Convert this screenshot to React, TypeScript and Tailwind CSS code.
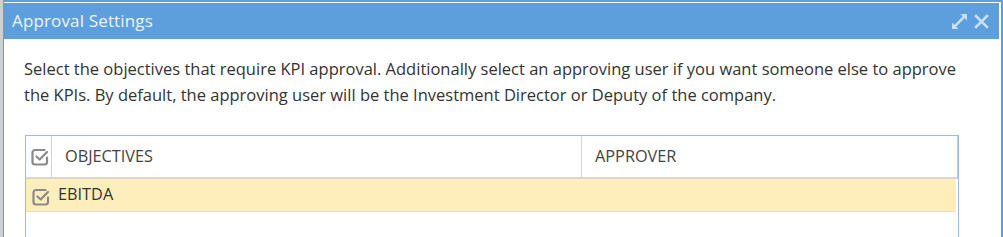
import React from 'react'

const CheckIcon = () => (
  <svg width="18" height="18" viewBox="0 0 18 18" fill="none" stroke="#8a8a8a" strokeWidth="2.2">
    <path d="M13.5 2H4a2.5 2.5 0 0 0-2.5 2.5v9.5A2.5 2.5 0 0 0 4 16.5h9.5a2.5 2.5 0 0 0 2.5-2.5V9.5" strokeLinecap="round" />
    <path d="M5.5 8.5l3.2 3 7.3-7.5" strokeLinecap="round" strokeLinejoin="round" />
  </svg>
)

const ExpandIcon = () => (
  <svg width="17" height="17" viewBox="0 0 16 16" fill="#c9e0f5" stroke="#c9e0f5">
    <path d="M3.5 12.5L12.5 3.5" strokeWidth="2.4" />
    <path d="M9 1h6v6z" stroke="none" />
    <path d="M1 9v6h6z" stroke="none" />
  </svg>
)

const CloseIcon = () => (
  <svg width="17" height="17" viewBox="0 0 16 16" stroke="#c9e0f5" strokeWidth="2.6">
    <path d="M2 2l12 12M14 2L2 14" />
  </svg>
)

export default function App() {
  return (
    <div
      className="relative w-[1003px] h-[237px] overflow-hidden bg-[#cfcfcf] flex"
      style={{ fontFamily: '"Open Sans", "Liberation Sans", sans-serif' }}
    >
      <div className="ml-[3px] flex-1 flex flex-col bg-white border-t-2 border-l border-r-2 border-[#5b9fdc] pt-px pr-[2px]">
        <div className="h-[36px] shrink-0 bg-[#5d9fdc] flex items-center pl-[8px] pr-[9px]">
          <span className="text-[17px] text-[#eef5fc] tracking-[0.15px]">Approval Settings</span>
          <div className="ml-auto flex items-center gap-[5px]">
            <ExpandIcon />
            <CloseIcon />
          </div>
        </div>
        <div className="pl-[20px] pr-[28px] pt-[17px]">
          <p className="text-[16.5px] leading-[26px] text-[#333]">
            Select the objectives that require KPI approval. Additionally select an approving user if you want someone
            else to approve the KPIs. By default, the approving user will be the Investment Director or Deputy of the
            company.
          </p>
          <div className="mt-[27px] ml-px w-[934px] h-[120px] border-t border-l border-r border-[#9dbce4]">
            <div className="flex h-[43px] border-b-2 border-[#d6d6d6] border-r border-r-[#c8c8c8] text-[16.3px] text-[#444]">
              <div className="w-[26px] shrink-0 border-r border-[#d4d4d4] flex items-center justify-center pl-[3px]">
                <CheckIcon />
              </div>
              <div className="w-[530px] shrink-0 border-r border-[#d4d4d4] flex items-center pl-[13px]">OBJECTIVES</div>
              <div className="flex-1 flex items-center pl-[13px]">APPROVER</div>
            </div>
            <div className="flex h-[33px] mr-[2px] bg-[#feeebc] border-b border-[#f1dfa8] text-[16.3px] text-[#333]">
              <div className="w-[26px] shrink-0 flex items-center justify-center pl-[3px] pt-[3px]">
                <CheckIcon />
              </div>
              <div className="flex items-center pl-[6px] pb-[2px]">EBITDA</div>
            </div>
          </div>
        </div>
      </div>
    </div>
  )
}
